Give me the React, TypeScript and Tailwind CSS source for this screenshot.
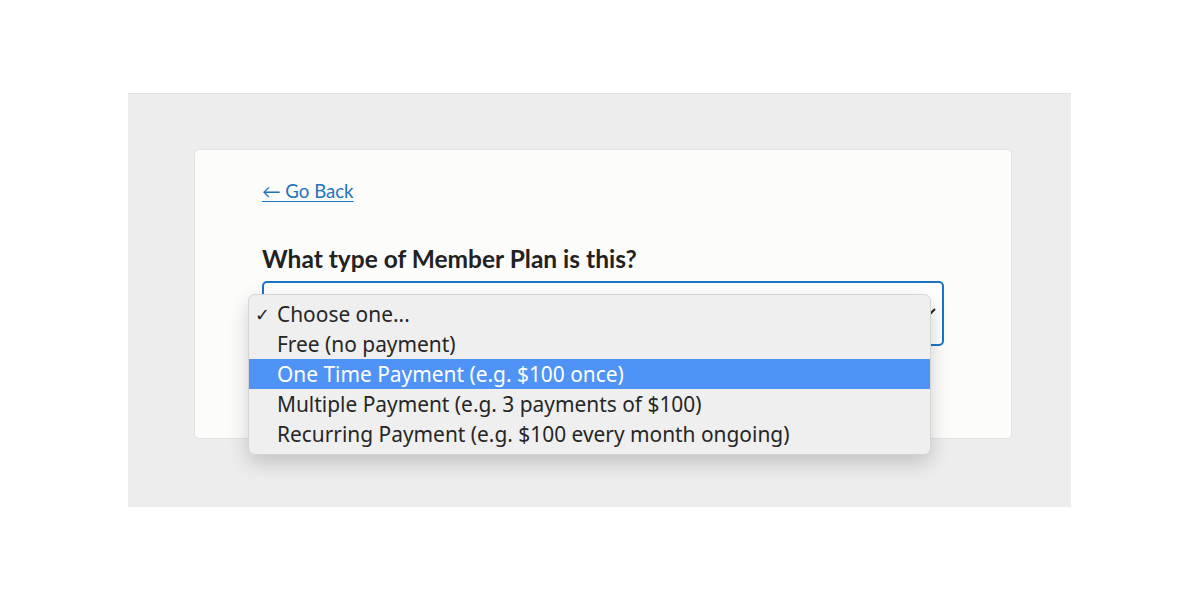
import React from "react";

const options = [
  "Choose one...",
  "Free (no payment)",
  "One Time Payment (e.g. $100 once)",
  "Multiple Payment (e.g. 3 payments of $100)",
  "Recurring Payment (e.g. $100 every month ongoing)",
];

export default function App() {
  return (
    <div className="w-[1200px] h-[600px] bg-white pt-[93px]" style={{ fontFamily: "Lato, sans-serif" }}>
      <div className="ml-[128px] w-[943px] h-[414px] bg-[#ededed] border-t border-[#e2e2e2] pt-[55px] pl-[66px]">
        <div className="relative w-[818px] h-[290px] bg-[#fcfcfb] border border-[#e3e3e3] rounded-[5px] pl-[67px] pr-[67px] pt-[28px]">
          <a href="#" className="text-[18.6px] leading-[26px] text-[#1e73be] underline underline-offset-[3px] decoration-1">
            ← Go Back
          </a>
          <h2 className="mt-[40px] text-[24.5px] leading-[30px] font-bold text-[#222222]">
            What type of Member Plan is this?
          </h2>
          <div className="mt-[7px] h-[65px] w-[682px] rounded-[5px] border-2 border-[#1a73c8] bg-white relative">
            <svg className="absolute right-[5px] top-[23px]" width="12" height="10" viewBox="0 0 12 10">
              <path d="M2 3 L6 7 L10 3" stroke="#222" strokeWidth="2" fill="none" />
            </svg>
          </div>
          <div
            className="absolute left-[53px] top-[144px] w-[683px] h-[161px] bg-[#efefef] rounded-[7px] border border-[#d4d4d4] shadow-[0_8px_20px_rgba(0,0,0,0.18)] pt-[4px] pb-[4px]"
            style={{ fontFamily: "'Noto Sans', Arial, sans-serif" }}
          >
            {options.map((o, i) => (
              <div
                key={o}
                className={
                  "h-[30px] flex items-center text-[20.9px] leading-[28px] pb-[1px] " +
                  (i === 2 ? "bg-[#4f93f7] text-white" : "text-[#262626]")
                }
              >
                <span className="w-[28px] pl-[6px] text-[18px]">{i === 0 ? "✓" : ""}</span>
                <span>{o}</span>
              </div>
            ))}
          </div>
        </div>
      </div>
    </div>
  );
}
